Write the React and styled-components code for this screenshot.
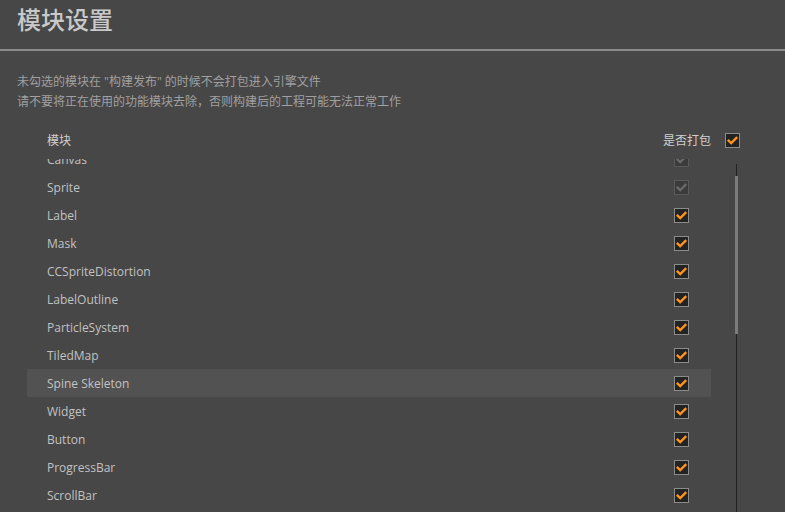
import React, { useLayoutEffect, useRef } from "react";
import styled, { createGlobalStyle } from "styled-components";

const GlobalStyle = createGlobalStyle`
  html, body, #root {
    margin: 0;
    height: 100%;
  }
  body {
    background: #474747;
    font-family: "Open Sans", "Noto Sans CJK SC", sans-serif;
    font-size: 12px;
    color: #bdbdbd;
    overflow: hidden;
  }
`;

const modules = [
  { name: "Canvas", checked: true, locked: true },
  { name: "Sprite", checked: true, locked: true },
  { name: "Label", checked: true },
  { name: "Mask", checked: true },
  { name: "CCSpriteDistortion", checked: true },
  { name: "LabelOutline", checked: true },
  { name: "ParticleSystem", checked: true },
  { name: "TiledMap", checked: true },
  { name: "Spine Skeleton", checked: true, hover: true },
  { name: "Widget", checked: true },
  { name: "Button", checked: true },
  { name: "ProgressBar", checked: true },
  { name: "ScrollBar", checked: true },
  { name: "ScrollView", checked: true },
  { name: "Slider", checked: true },
  { name: "PageView", checked: true },
];

function App() {
  const listRef = useRef(null);

  // the list is shown scrolled a little, with Canvas half hidden
  useLayoutEffect(() => {
    if (listRef.current) listRef.current.scrollTop = 14;
  }, []);

  return (
    <Page>
      <GlobalStyle />
      <Header>
        <Title>模块设置</Title>
      </Header>
      <Notes>
        <p>未勾选的模块在 "构建发布" 的时候不会打包进入引擎文件</p>
        <p>请不要将正在使用的功能模块去除，否则构建后的工程可能无法正常工作</p>
      </Notes>
      <Table>
        <HeadRow>
          <span>模块</span>
          <HeadRight>
            <span>是否打包</span>
            <CheckBox checked />
          </HeadRight>
        </HeadRow>
        <Body>
          <List ref={listRef}>
            {modules.map((m) => (
              <Row key={m.name} $hover={m.hover}>
                <span>{m.name}</span>
                <CheckBox checked={m.checked} locked={m.locked} />
              </Row>
            ))}
          </List>
          <ScrollBar>
            <Track $h={12} />
            <Thumb />
            <Track $grow />
          </ScrollBar>
        </Body>
      </Table>
    </Page>
  );
}

function CheckBox({ checked, locked }) {
  return (
    <Box $locked={locked}>
      {checked && (
        <svg width="13" height="13" viewBox="0 0 13 13">
          <path
            d="M2.6 6.6 L5.2 9.1 L10.4 3.9"
            fill="none"
            stroke={locked ? "#6a6a6a" : "#ff951c"}
            strokeWidth="2.3"
            strokeLinecap="square"
          />
        </svg>
      )}
    </Box>
  );
}

export default App;

const Page = styled.div`
  display: flex;
  flex-direction: column;
  height: 100vh;
`;

const Header = styled.div`
  height: 51px;
  box-sizing: border-box;
  padding: 4px 17px 0;
  border-bottom: 2px solid #8a8a8a;
`;

const Title = styled.h1`
  margin: 0;
  font-family: "Noto Sans CJK SC", sans-serif;
  font-size: 24px;
  line-height: 30px;
  font-weight: 500;
  color: #c9c9c9;
`;

const Notes = styled.div`
  padding: 21px 17px 0;
  color: #a0a0a0;
  p {
    margin: 0;
    line-height: 20px;
  }
`;

const Table = styled.div`
  flex: 1;
  min-height: 0;
  display: flex;
  flex-direction: column;
  padding: 14px 45px 0 27px;
`;

const HeadRow = styled.div`
  height: 28px;
  display: flex;
  align-items: center;
  justify-content: space-between;
  padding-left: 20px;
  color: #d0d0d0;
`;

const HeadRight = styled.div`
  display: flex;
  align-items: center;
  gap: 14px;
`;

const Body = styled.div`
  flex: 1;
  min-height: 0;
  display: flex;
  margin-top: 5px;
`;

const List = styled.div`
  width: 684px;
  overflow-y: auto;
  scrollbar-width: none;
  &::-webkit-scrollbar {
    display: none;
  }
`;

const Row = styled.div`
  height: 28px;
  display: flex;
  align-items: center;
  justify-content: space-between;
  padding: 0 22px 0 20px;
  background: ${(p) => (p.$hover ? "#525252" : "transparent")};
  color: #c2c2c2;
`;

const Box = styled.div`
  width: 15px;
  height: 15px;
  box-sizing: border-box;
  border: 1px solid ${(p) => (p.$locked ? "#5a5a5a" : "#8c8c8c")};
  background: ${(p) => (p.$locked ? "#3b3b3b" : "#232323")};
  display: flex;
  align-items: center;
  justify-content: center;
`;

const ScrollBar = styled.div`
  margin-left: 24px;
  width: 3px;
  padding-top: 5px;
  display: flex;
  flex-direction: column;
  align-items: center;
`;

const Track = styled.div`
  width: 1px;
  background: #222;
  height: ${(p) => (p.$h ? `${p.$h}px` : "auto")};
  flex: ${(p) => (p.$grow ? 1 : "none")};
`;

const Thumb = styled.div`
  width: 3px;
  height: 158px;
  background: #7c7c7c;
`;
